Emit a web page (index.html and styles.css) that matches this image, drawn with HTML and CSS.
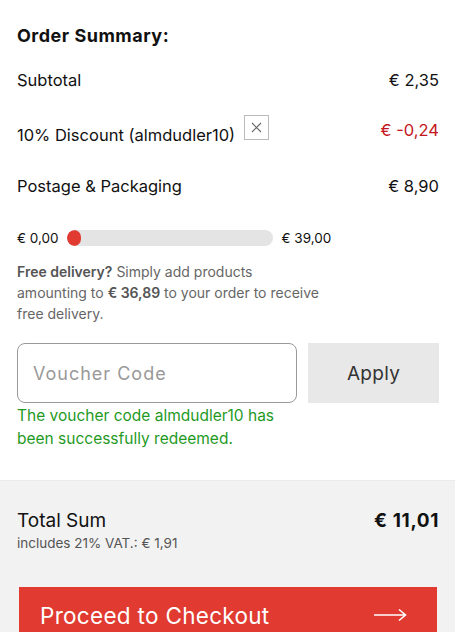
FILE: index.html
```html
<!DOCTYPE html>
<html lang="en">
<head>
<meta charset="utf-8">
<title>Order Summary</title>
<link rel="stylesheet" href="styles.css">
</head>
<body>
<div class="summary">
  <h2 class="title">Order Summary:</h2>
  <div class="row row-subtotal">
    <span>Subtotal</span>
    <span>€ 2,35</span>
  </div>
  <div class="row row-discount">
    <span class="discount-label">
      <span>10% Discount (almdudler10)</span>
      <button class="remove" aria-label="Remove">
        <svg width="11" height="11" viewBox="0 0 11 11"><path d="M1 1L10 10M10 1L1 10" stroke="#666" stroke-width="1.1" fill="none"/></svg>
      </button>
    </span>
    <span class="neg">€ -0,24</span>
  </div>
  <div class="row row-postage">
    <span>Postage &amp; Packaging</span>
    <span>€ 8,90</span>
  </div>
  <div class="progress">
    <span class="plabel">€ 0,00</span>
    <div class="track"><div class="fill" style="width:14px"></div></div>
    <span class="plabel">€ 39,00</span>
  </div>
  <p class="hint"><b>Free delivery?</b> Simply add products<br>amounting to <b>€ 36,89</b> to your order to receive<br>free delivery.</p>
  <div class="voucher">
    <input class="code" type="text" placeholder="Voucher Code">
    <button class="apply">Apply</button>
  </div>
  <p class="success">The voucher code almdudler10 has<br>been successfully redeemed.</p>
</div>
<div class="totals">
  <div class="total-row">
    <div>
      <div class="total-label">Total Sum</div>
      <div class="vat">includes 21% VAT.: € 1,91</div>
    </div>
    <div class="total-value">€ 11,01</div>
  </div>
  <button class="checkout">
    <span>Proceed to Checkout</span>
    <svg width="33" height="14" viewBox="0 0 33 14"><path d="M0 7H31M25 1.5L31.5 7L25 12.5" stroke="#fff" stroke-width="1.6" fill="none"/></svg>
  </button>
</div>
</body>
</html>
```
FILE: styles.css
```css
* { box-sizing: border-box; }
html, body { margin: 0; padding: 0; }
body {
  width: 455px;
  height: 632px;
  overflow: hidden;
  font-family: Inter, "Noto Sans", sans-serif;
  color: #111;
  background: #fff;
}
.summary {
  padding: 24px 16px 0 17px;
}
.title {
  margin: 0;
  font-size: 18px;
  font-weight: 650;
  letter-spacing: 0.5px;
  line-height: 24px;
}
.row {
  display: flex;
  justify-content: space-between;
  align-items: center;
  font-size: 16.5px;
  line-height: 20px;
}
.row-subtotal { margin-top: 22px; }
.row-discount { margin-top: 25px; }
.row-postage { margin-top: 31px; }
.discount-label {
  display: flex;
  align-items: flex-end;
  gap: 9px;
}
.remove {
  width: 25px;
  height: 25px;
  margin-bottom: 5px;
  padding: 0;
  border: 1px solid #bbb;
  background: #fff;
  display: flex;
  align-items: center;
  justify-content: center;
}
.neg { color: #c4161c; }
.progress {
  display: flex;
  align-items: center;
  margin-top: 34px;
  gap: 8px;
}
.plabel {
  font-size: 13.5px;
  line-height: 16px;
}
.track {
  width: 206px;
  height: 16px;
  border-radius: 8px;
  background: #e4e4e4;
  overflow: hidden;
  margin-right: 1px;
}
.fill {
  height: 100%;
  border-radius: 8px;
  background: #e03a31;
}
.hint {
  margin: 15px 0 0;
  font-size: 14px;
  line-height: 21px;
  color: #666;
}
.hint b { font-weight: 600; color: #555; }
.voucher {
  display: flex;
  gap: 11px;
  margin-top: 19px;
}
.code {
  width: 280px;
  height: 60px;
  border: 1px solid #999;
  border-radius: 8px;
  padding: 0 15px;
  font-family: inherit;
  font-size: 18px;
  letter-spacing: 1px;
  color: #111;
  outline: none;
}
.code::placeholder { color: #999; }
.apply {
  flex: 1;
  height: 60px;
  border: none;
  background: #e8e8e8;
  font-family: inherit;
  font-size: 19px;
  letter-spacing: 0.3px;
  color: #333;
}
.success {
  margin: 1px 0 0;
  font-size: 15.5px;
  line-height: 23px;
  color: #1f9a1f;
}
.totals {
  margin-top: 30px;
  background: #f2f2f2;
  border-top: 1px solid #ebebeb;
  padding: 29px 16px 0 17px;
  height: 152px;
  overflow: hidden;
}
.total-row {
  display: flex;
  justify-content: space-between;
  align-items: flex-start;
}
.total-label {
  font-size: 19px;
  line-height: 22px;
}
.total-value {
  font-size: 19px;
  font-weight: 700;
  letter-spacing: 0.6px;
  line-height: 22px;
}
.vat {
  margin-top: 3px;
  font-size: 13.5px;
  line-height: 16px;
  color: #555;
}
.checkout {
  margin-top: 36px;
  margin-left: 2px;
  width: 418px;
  height: 60px;
  border: none;
  background: #e03a31;
  color: #fff;
  display: flex;
  align-items: center;
  justify-content: space-between;
  padding: 0 30px 4px 21px;
  font-family: inherit;
  font-size: 22.5px;
  letter-spacing: 0.3px;
}
```
